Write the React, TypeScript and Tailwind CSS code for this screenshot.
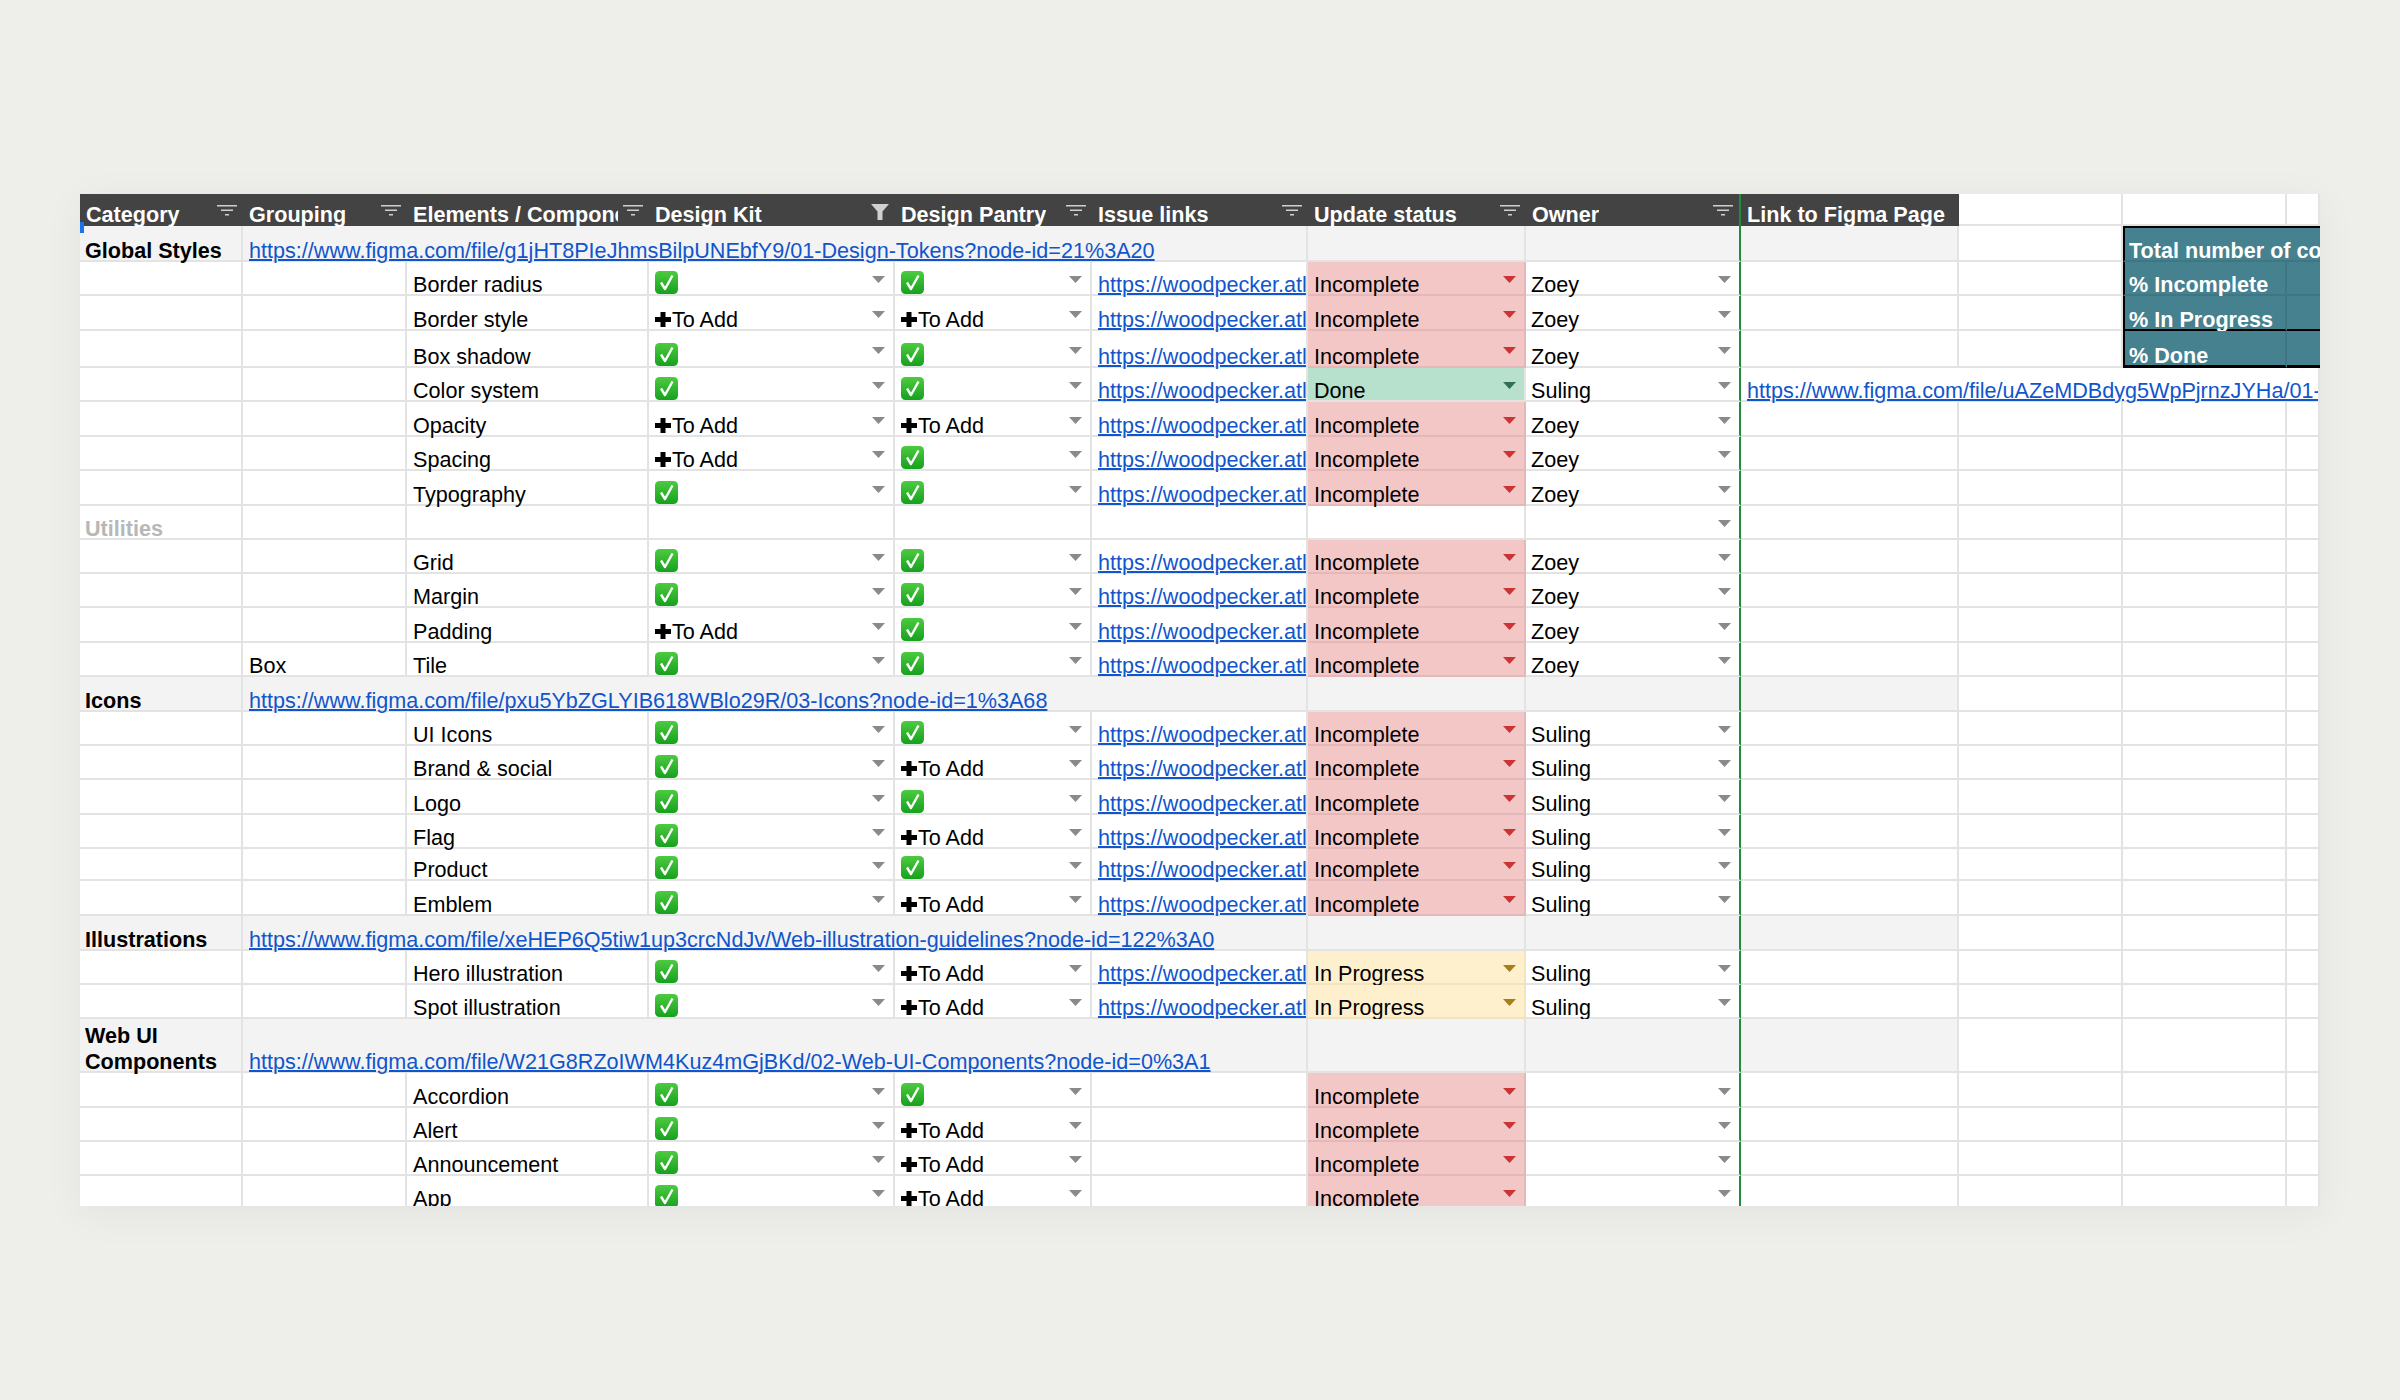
import React from 'react';

type Mark = 'check' | 'add';
type Status = 'Incomplete' | 'In Progress' | 'Done';

type Row =
  | { kind: 'section'; h: string; title: string[]; link: string }
  | { kind: 'empty'; h: string; title: string }
  | {
      kind: 'item';
      h: string;
      name: string;
      group?: string;
      kit: Mark;
      pantry: Mark;
      issue?: boolean;
      status: Status;
      owner?: string;
      figma?: string;
    };

const gridCols = 'grid grid-cols-[163px_164px_242px_246px_197px_216px_218px_215px_218px_164px_164px_33px]';
const cell = 'flex items-end justify-between min-w-0 px-[6px] border-r-2 border-b-2 border-[#e3e3e3] whitespace-nowrap';
const freeze = 'border-r-[#1e8e3e]';

const issueUrl = 'https://woodpecker.atla';

const rows: Row[] = [
  { kind: 'section', h: 'h-[36px]', title: ['Global Styles'], link: 'https://www.figma.com/file/g1jHT8PIeJhmsBilpUNEbfY9/01-Design-Tokens?node-id=21%3A20' },
  { kind: 'item', h: 'h-[34px]', name: 'Border radius', kit: 'check', pantry: 'check', issue: true, status: 'Incomplete', owner: 'Zoey' },
  { kind: 'item', h: 'h-[35px]', name: 'Border style', kit: 'add', pantry: 'add', issue: true, status: 'Incomplete', owner: 'Zoey' },
  { kind: 'item', h: 'h-[37px]', name: 'Box shadow', kit: 'check', pantry: 'check', issue: true, status: 'Incomplete', owner: 'Zoey' },
  { kind: 'item', h: 'h-[34px]', name: 'Color system', kit: 'check', pantry: 'check', issue: true, status: 'Done', owner: 'Suling', figma: 'https://www.figma.com/file/uAZeMDBdyg5WpPjrnzJYHa/01-' },
  { kind: 'item', h: 'h-[35px]', name: 'Opacity', kit: 'add', pantry: 'add', issue: true, status: 'Incomplete', owner: 'Zoey' },
  { kind: 'item', h: 'h-[34px]', name: 'Spacing', kit: 'add', pantry: 'check', issue: true, status: 'Incomplete', owner: 'Zoey' },
  { kind: 'item', h: 'h-[35px]', name: 'Typography', kit: 'check', pantry: 'check', issue: true, status: 'Incomplete', owner: 'Zoey' },
  { kind: 'empty', h: 'h-[34px]', title: 'Utilities' },
  { kind: 'item', h: 'h-[34px]', name: 'Grid', kit: 'check', pantry: 'check', issue: true, status: 'Incomplete', owner: 'Zoey' },
  { kind: 'item', h: 'h-[34px]', name: 'Margin', kit: 'check', pantry: 'check', issue: true, status: 'Incomplete', owner: 'Zoey' },
  { kind: 'item', h: 'h-[35px]', name: 'Padding', kit: 'add', pantry: 'check', issue: true, status: 'Incomplete', owner: 'Zoey' },
  { kind: 'item', h: 'h-[34px]', name: 'Tile', group: 'Box', kit: 'check', pantry: 'check', issue: true, status: 'Incomplete', owner: 'Zoey' },
  { kind: 'section', h: 'h-[35px]', title: ['Icons'], link: 'https://www.figma.com/file/pxu5YbZGLYIB618WBlo29R/03-Icons?node-id=1%3A68' },
  { kind: 'item', h: 'h-[34px]', name: 'UI Icons', kit: 'check', pantry: 'check', issue: true, status: 'Incomplete', owner: 'Suling' },
  { kind: 'item', h: 'h-[34px]', name: 'Brand & social', kit: 'check', pantry: 'add', issue: true, status: 'Incomplete', owner: 'Suling' },
  { kind: 'item', h: 'h-[35px]', name: 'Logo', kit: 'check', pantry: 'check', issue: true, status: 'Incomplete', owner: 'Suling' },
  { kind: 'item', h: 'h-[34px]', name: 'Flag', kit: 'check', pantry: 'add', issue: true, status: 'Incomplete', owner: 'Suling' },
  { kind: 'item', h: 'h-[32px]', name: 'Product', kit: 'check', pantry: 'check', issue: true, status: 'Incomplete', owner: 'Suling' },
  { kind: 'item', h: 'h-[35px]', name: 'Emblem', kit: 'check', pantry: 'add', issue: true, status: 'Incomplete', owner: 'Suling' },
  { kind: 'section', h: 'h-[35px]', title: ['Illustrations'], link: 'https://www.figma.com/file/xeHEP6Q5tiw1up3crcNdJv/Web-illustration-guidelines?node-id=122%3A0' },
  { kind: 'item', h: 'h-[34px]', name: 'Hero illustration', kit: 'check', pantry: 'add', issue: true, status: 'In Progress', owner: 'Suling' },
  { kind: 'item', h: 'h-[34px]', name: 'Spot illustration', kit: 'check', pantry: 'add', issue: true, status: 'In Progress', owner: 'Suling' },
  { kind: 'section', h: 'h-[54px]', title: ['Web UI', 'Components'], link: 'https://www.figma.com/file/W21G8RZoIWM4Kuz4mGjBKd/02-Web-UI-Components?node-id=0%3A1' },
  { kind: 'item', h: 'h-[35px]', name: 'Accordion', kit: 'check', pantry: 'check', status: 'Incomplete' },
  { kind: 'item', h: 'h-[34px]', name: 'Alert', kit: 'check', pantry: 'add', status: 'Incomplete' },
  { kind: 'item', h: 'h-[34px]', name: 'Announcement', kit: 'check', pantry: 'add', status: 'Incomplete' },
  { kind: 'item', h: 'h-[34px]', name: 'App', kit: 'check', pantry: 'add', status: 'Incomplete' },
];

const statusStyle: Record<Status, { bg: string; arrow: string }> = {
  Incomplete: { bg: 'bg-[#f4c7c7] border-[#e4b8b8]', arrow: 'fill-[#cc3333]' },
  'In Progress': { bg: 'bg-[#feefcd] border-[#f3e3bd]', arrow: 'fill-[#a67f1c]' },
  Done: { bg: 'bg-[#b7e1cd] border-[#a8d3be]', arrow: 'fill-[#2f6f54]' },
};

// dropdown triangle at the right of a chip cell
function Arrow({ color = 'fill-[#8a8a8a]' }: { color?: string }) {
  return (
    <svg width="13" height="7" viewBox="0 0 13 7" className={`self-center shrink-0 mr-[2px] mt-[3px] ${color}`}>
      <path d="M0 0h13L6.5 7z" />
    </svg>
  );
}

function FilterIcon() {
  return (
    <svg width="20" height="11" viewBox="0 0 20 11" className="self-start shrink-0 mt-[11px] fill-[#d0d0d0]">
      <rect x="0" y="0" width="20" height="1.5" />
      <rect x="4" y="4.5" width="12" height="1.5" />
      <rect x="8" y="9" width="4" height="1.5" />
    </svg>
  );
}

function FunnelIcon() {
  return (
    <svg width="18" height="16" viewBox="0 0 18 16" className="self-start shrink-0 mt-[10px] fill-[#d0d0d0]">
      <path d="M0 0h18l-6.500 7.500V16h-5V7.500z" />
    </svg>
  );
}

function CheckMark() {
  return (
    <svg width="23" height="23" viewBox="0 0 23 23" className="shrink-0">
      <defs>
        <linearGradient id="checkFill" x1="0" y1="0" x2="0" y2="1">
          <stop offset="0" stopColor="#4ccb3f" />
          <stop offset="1" stopColor="#17a01f" />
        </linearGradient>
      </defs>
      <rect width="23" height="23" rx="4.5" fill="url(#checkFill)" />
      <path d="M6 11.500l4 6.500L17.500 4.500" fill="none" stroke="#fff" strokeWidth="2.4" strokeLinejoin="round" />
    </svg>
  );
}

function AddMark() {
  return (
    <span className="flex items-end leading-[18px]">
      <svg width="16" height="15" viewBox="0 0 16 15" className="shrink-0 mr-[1px] mb-[2px] fill-black">
        <path d="M5.500 0h5v5H16v5h-5.500v5h-5v-5H0V5h5.500z" />
      </svg>
      To Add
    </span>
  );
}

function MarkCell({ mark }: { mark: Mark }) {
  return (
    <div className={cell}>
      {mark === 'check' ? <CheckMark /> : <AddMark />}
      <Arrow />
    </div>
  );
}

function Link({ href }: { href: string }) {
  return <span className="leading-[18px] text-[#1155cc] underline decoration-[1.5px]">{href}</span>;
}

function Plain({ children }: { children?: React.ReactNode }) {
  return <div className={cell}><span className="leading-[18px]">{children}</span></div>;
}

// columns to the right of the frozen line, teal summary box sits on the first four rows
function SummaryCells({ index }: { index: number }) {
  const teal = 'flex items-end px-[4px] bg-[#45818e] whitespace-nowrap font-bold text-white border-b-2 border-[#3f7682]';
  if (index === 0) {
    return (
      <div className={`${teal} col-span-2 overflow-x-clip border-l-2 border-t-2 border-l-black border-t-black`}>
        <span className="leading-[18px]">Total number of components</span>
      </div>
    );
  }
  const labels = ['', '% Incomplete', '% In Progress', '% Done'];
  const bottom = index === 3 ? 'border-b-black border-b-[3px]' : index === 2 ? 'border-b-black' : '';
  return (
    <>
      <div className={`${teal} ${bottom} border-l-2 border-l-black border-r-2 border-r-[#3f7682]`}>
        <span className="leading-[18px]">{labels[index]}</span>
      </div>
      <div className={`${teal} ${bottom}`} />
    </>
  );
}

function HeaderRow() {
  const names = ['Category', 'Grouping', 'Elements / Components', 'Design Kit', 'Design Pantry', 'Issue links', 'Update status', 'Owner'];
  return (
    <div className={`${gridCols} relative z-10 h-[32px]`}>
      {names.map((name, i) => (
        <div
          key={name}
          className={`flex items-end justify-between min-w-0 pl-[6px] pr-[6px] bg-[#434343] font-bold text-white whitespace-nowrap ${i === 0 || i === 7 ? 'pl-[5px]' : ''} ${i === 7 ? `border-r-2 ${freeze}` : ''}`}
        >
          <span className="min-w-0 overflow-x-clip leading-[22px] mr-[5px]">{name}</span>
          {i === 3 ? <FunnelIcon /> : <FilterIcon />}
        </div>
      ))}
      <div className="flex items-end px-[6px] bg-[#434343] font-bold text-white whitespace-nowrap">
        <span className="leading-[22px]">Link to Figma Page</span>
      </div>
      <div className={cell} />
      <div className={cell} />
      <div className={`${cell} border-r-0`} />
    </div>
  );
}

function SectionRow({ row, index }: { row: Extract<Row, { kind: 'section' }>; index: number }) {
  const shade = 'bg-[#f3f3f3] border-[#dedede]';
  return (
    <div className={`${gridCols} ${row.h}`}>
      <div className={`${cell} ${shade} pl-[5px] font-bold`}>
        {row.title.length > 1 ? (
          <span className="leading-[26px] -mb-[4px]">
            {row.title[0]}
            <br />
            {row.title[1]}
          </span>
        ) : (
          <span className="leading-[18px]">{row.title[0]}</span>
        )}
      </div>
      <div className={`${cell} ${shade} col-span-5`}><Link href={row.link} /></div>
      <div className={`${cell} ${shade}`} />
      <div className={`${cell} ${shade} ${freeze}`} />
      <div className={`${cell} ${shade}`} />
      {index === 0 ? (
        <>
          <div className={cell} />
          <SummaryCells index={0} />
        </>
      ) : (
        <>
          <div className={cell} />
          <div className={cell} />
          <div className={`${cell} border-r-0`} />
        </>
      )}
    </div>
  );
}

function ItemRow({ row, index }: { row: Extract<Row, { kind: 'item' }>; index: number }) {
  const look = statusStyle[row.status];
  return (
    <div className={`${gridCols} ${row.h}`}>
      <Plain />
      <Plain>{row.group}</Plain>
      <Plain>{row.name}</Plain>
      <MarkCell mark={row.kit} />
      <MarkCell mark={row.pantry} />
      <div className={`${cell} overflow-x-clip pr-0`}>{row.issue && <Link href={issueUrl} />}</div>
      <div className={`${cell} ${look.bg}`}>
        <span className="leading-[18px]">{row.status}</span>
        <Arrow color={look.arrow} />
      </div>
      <div className={`${cell} ${freeze} pl-[5px]`}>
        <span className="leading-[18px]">{row.owner}</span>
        <Arrow />
      </div>
      {row.figma ? (
        <div className={`${cell} col-span-4 overflow-x-clip border-r-0`}><Link href={row.figma} /></div>
      ) : (
        <>
          <Plain />
          {index <= 3 ? (
            <>
              <div className={cell} />
              <SummaryCells index={index} />
            </>
          ) : (
            <>
              <div className={cell} />
              <div className={cell} />
              <div className={`${cell} border-r-0`} />
            </>
          )}
        </>
      )}
    </div>
  );
}

function EmptyRow({ row }: { row: Extract<Row, { kind: 'empty' }> }) {
  return (
    <div className={`${gridCols} ${row.h}`}>
      <div className={`${cell} pl-[5px] font-bold text-[#b7b7b7]`}><span className="leading-[18px]">{row.title}</span></div>
      <Plain />
      <Plain />
      <Plain />
      <Plain />
      <Plain />
      <Plain />
      <div className={`${cell} ${freeze}`}>
        <span />
        <Arrow />
      </div>
      <Plain />
      <Plain />
      <Plain />
      <div className={`${cell} border-r-0`} />
    </div>
  );
}

export default function App() {
  return (
    <div className="h-[1400px] bg-[#eeefeb] pl-[80px] pt-[194px] font-['Liberation_Sans',Arial,sans-serif] text-[21.6px] text-black">
      <div className="relative w-[2240px] h-[1012px] overflow-hidden bg-white shadow-[0_8px_40px_rgba(0,0,0,0.05)]">
        <HeaderRow />
        {rows.map((row, i) =>
          row.kind === 'section' ? (
            <SectionRow key={i} row={row} index={i} />
          ) : row.kind === 'empty' ? (
            <EmptyRow key={i} row={row} />
          ) : (
            <ItemRow key={i} row={row} index={i} />
          ),
        )}
        {/* selected cell corner */}
        <div className="absolute left-0 top-[28px] z-20 w-[4px] h-[11px] bg-[#1a73e8]" />
      </div>
    </div>
  );
}
